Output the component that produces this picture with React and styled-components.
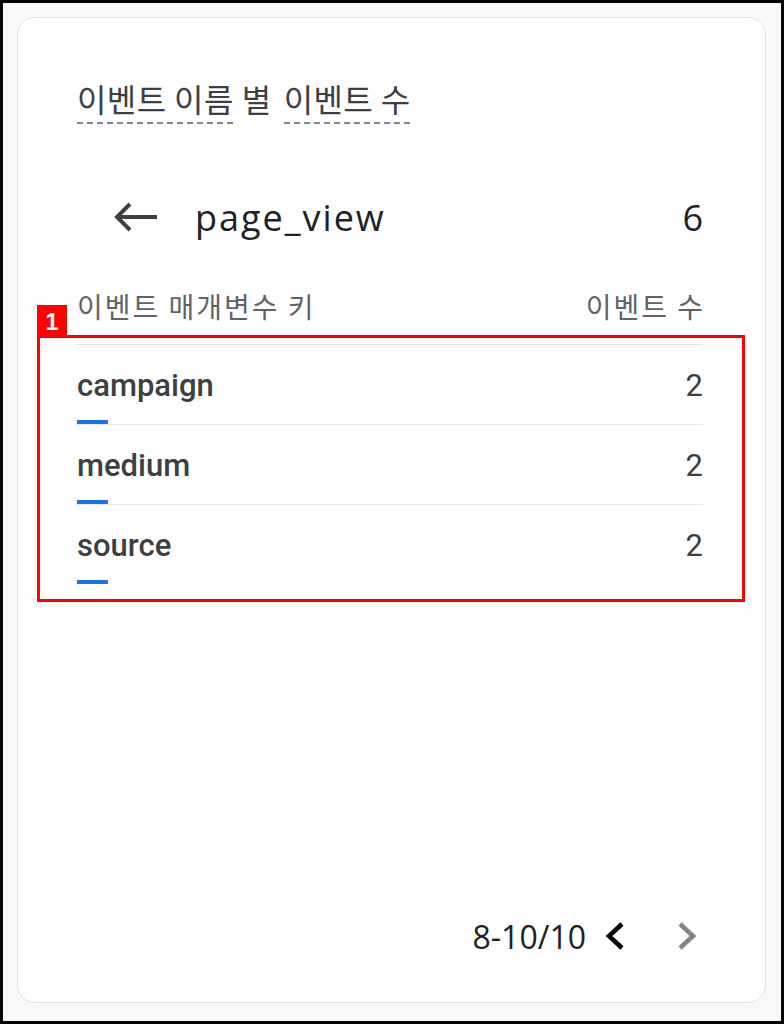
import React from 'react';
import styled, { createGlobalStyle } from 'styled-components';

const Global = createGlobalStyle`
  html, body { margin: 0; padding: 0; }
  body { background: #f8f9fa; font-family: Roboto, "Noto Sans CJK KR", sans-serif; }
`;

const Frame = styled.div`
  box-sizing: border-box;
  width: 784px;
  height: 1024px;
  border: 3px solid #000;
  background: #f8f9fa;
  padding: 14px 15px 18px 14px;
  display: flex;
`;

const Card = styled.div`
  flex: 1;
  display: flex;
  flex-direction: column;
  background: #fff;
  border: 1px solid #dfe1e5;
  border-radius: 18px;
  padding: 58px 62px 44px 59px;
`;

const Title = styled.div`
  display: flex;
  align-items: flex-end;
  font-family: "Noto Sans CJK KR", sans-serif;
  font-size: 32px;
  line-height: 44px;
  color: #3c4043;
  letter-spacing: 0.4px;
`;

const Dashed = styled.span`
  padding-bottom: 4px;
  background-image: linear-gradient(to right, #80868b 60%, transparent 60%);
  background-size: 10px 2px;
  background-repeat: repeat-x;
  background-position: left bottom;
`;

const Plain = styled.span`
  padding: 0 12px 4px 8px;
`;

const Drill = styled.div`
  display: flex;
  align-items: center;
  margin-top: 71px;
  height: 44px;
`;

const Back = styled.div`
  width: 46px;
  margin-left: 36px;
  margin-right: 36px;
  display: flex;
  align-items: center;
`;

const EventName = styled.div`
  flex: 1;
  font-family: "Open Sans", Roboto, sans-serif;
  font-size: 36px;
  color: #202124;
  letter-spacing: 2px;
`;

const Total = styled.div`
  font-family: "Open Sans", Roboto, sans-serif;
  font-size: 36px;
  color: #202124;
`;

const ColHead = styled.div`
  display: flex;
  justify-content: space-between;
  margin-top: 49px;
  font-family: "Noto Sans CJK KR", sans-serif;
  font-size: 28px;
  line-height: 36px;
  color: #5f6368;
  letter-spacing: 2px;
`;

const HeadRight = styled.span`
  margin-right: -2px;
`;

const Table = styled.div`
  position: relative;
  margin-top: 20px;
  border-top: 1px solid #e0e0e0;
`;

const Row = styled.div`
  position: relative;
  height: 79px;
  border-bottom: ${p => (p.last ? 'none' : '1px solid #e8eaed')};
`;

const RowLine = styled.div`
  display: flex;
  justify-content: space-between;
  align-items: center;
  padding-top: 22px;
  height: 36px;
  font-family: Roboto, sans-serif;
  font-size: 31px;
  color: #3c4043;
`;

const Key = styled.span`
  font-weight: 500;
`;

const Count = styled.span`
  font-weight: 400;
`;

const Bar = styled.div`
  position: absolute;
  left: 0;
  bottom: 0;
  height: 4px;
  background: #1a73e8;
`;

const Annot = styled.div`
  position: absolute;
  left: -40px;
  right: -42px;
  top: -10px;
  height: 267px;
  border: 3px solid #ff0000;
  box-sizing: border-box;
  pointer-events: none;
`;

const Badge = styled.div`
  position: absolute;
  left: -3px;
  top: -33px;
  width: 30px;
  height: 33px;
  background: #ff0000;
  color: #fff;
  font-family: "Liberation Sans", Arial, sans-serif;
  font-weight: 700;
  font-size: 24px;
  line-height: 33px;
  text-align: center;
`;

const Pager = styled.div`
  margin-top: auto;
  display: flex;
  justify-content: flex-end;
  align-items: center;
  gap: 18px;
  height: 44px;
  font-family: "Open Sans", Roboto, sans-serif;
  font-size: 32px;
  color: #202124;
`;

const Nav = styled.div`
  display: flex;
  align-items: center;
  gap: 50px;
  margin-right: 5px;
`;

const rows = [
  { key: 'campaign', value: 2 },
  { key: 'medium', value: 2 },
  { key: 'source', value: 2 },
];

export default function App() {
  return (
    <>
      <Global />
      <Frame>
        <Card>
          <Title>
            <Dashed>이벤트 이름</Dashed>
            <Plain>별</Plain>
            <Dashed>이벤트 수</Dashed>
          </Title>

          <Drill>
            <Back>
              <svg width="46" height="34" viewBox="0 0 46 34">
                <path d="M44 17H4M17 4L4 17l13 13" fill="none" stroke="#3c4043" strokeWidth="4" />
              </svg>
            </Back>
            <EventName>page_view</EventName>
            <Total>6</Total>
          </Drill>

          <ColHead>
            <span>이벤트 매개변수 키</span>
            <HeadRight>이벤트 수</HeadRight>
          </ColHead>

          <Table>
            {rows.map((r, i) => (
              <Row key={r.key} last={i === rows.length - 1}>
                <RowLine>
                  <Key>{r.key}</Key>
                  <Count>{r.value}</Count>
                </RowLine>
                <Bar style={{ width: `${(r.value / 40) * 100}%` }} />
              </Row>
            ))}
            <Annot>
              <Badge>1</Badge>
            </Annot>
          </Table>

          <Pager>
            <span>8-10/10</span>
            <Nav>
              <svg width="22" height="30" viewBox="0 0 22 30">
                <path d="M18 3L5 15l13 12" fill="none" stroke="#000" strokeWidth="4.5" />
              </svg>
              <svg width="22" height="30" viewBox="0 0 22 30">
                <path d="M4 3l13 12L4 27" fill="none" stroke="#80868b" strokeWidth="4.5" />
              </svg>
            </Nav>
          </Pager>
        </Card>
      </Frame>
    </>
  );
}
